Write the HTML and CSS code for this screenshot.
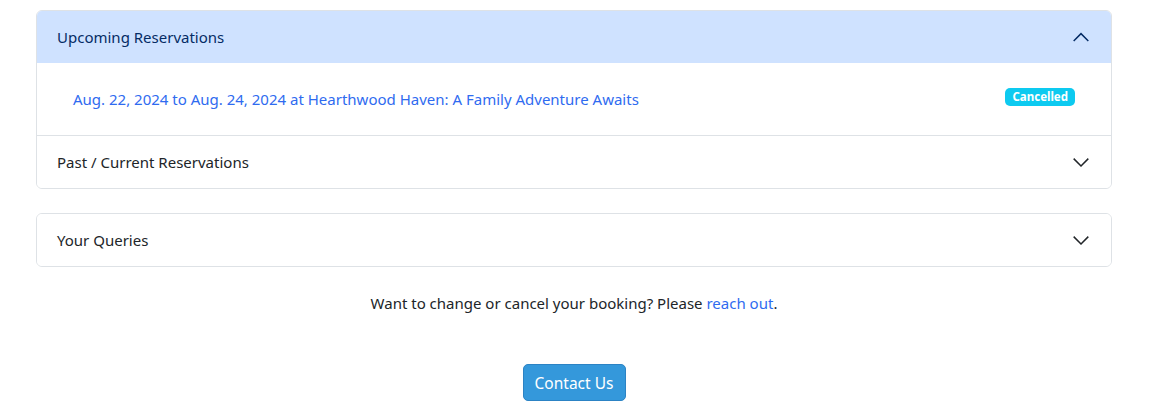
FILE: index.html
```html
<!DOCTYPE html>
<html lang="en">
<head>
<meta charset="utf-8">
<title>Reservations</title>
<link rel="stylesheet" href="styles.css">
</head>
<body>
<main class="page">
  <section class="accordion">
    <div class="acc-item">
      <button class="acc-btn active" type="button">
        <span>Upcoming Reservations</span>
        <svg class="chev" viewBox="0 0 16 16" width="18" height="18"><path d="M1.5 11.5 8 5l6.5 6.5" fill="none" stroke="currentColor" stroke-width="1.3"/></svg>
      </button>
      <div class="acc-body">
        <div class="res-item">
          <a href="#" class="res-link">Aug. 22, 2024 to Aug. 24, 2024 at Hearthwood Haven: A Family Adventure Awaits</a>
          <span class="badge">Cancelled</span>
        </div>
      </div>
    </div>
    <div class="acc-item">
      <button class="acc-btn" type="button">
        <span>Past / Current Reservations</span>
        <svg class="chev" viewBox="0 0 16 16" width="18" height="18"><path d="M1.5 5 8 11.5 14.5 5" fill="none" stroke="currentColor" stroke-width="1.3"/></svg>
      </button>
    </div>
  </section>

  <section class="accordion second">
    <div class="acc-item">
      <button class="acc-btn" type="button">
        <span>Your Queries</span>
        <svg class="chev" viewBox="0 0 16 16" width="18" height="18"><path d="M1.5 5 8 11.5 14.5 5" fill="none" stroke="currentColor" stroke-width="1.3"/></svg>
      </button>
    </div>
  </section>

  <p class="note">Want to change or cancel your booking? Please <a href="#">reach out</a>.</p>

  <div class="actions">
    <button class="contact" type="button">Contact Us</button>
  </div>
</main>
</body>
</html>
```

FILE: styles.css
```css
* { box-sizing: border-box; }
html, body { margin: 0; padding: 0; background: #fff; }
body {
  font-family: "Noto Sans", "Open Sans", sans-serif;
  font-size: 15px;
  color: #212529;
}
.page {
  width: 1076px;
  margin-left: 36px;
  padding-top: 10px;
}
.accordion {
  border: 1px solid #dee2e6;
  border-radius: 6px;
  overflow: hidden;
}
.accordion.second { margin-top: 24px; }
.acc-item + .acc-item { border-top: 1px solid #dee2e6; }
.acc-btn {
  display: flex;
  align-items: center;
  justify-content: space-between;
  width: 100%;
  height: 52px;
  padding: 0 21px 0 20px;
  border: 0;
  background: #fff;
  font: inherit;
  color: #212529;
  text-align: left;
  cursor: pointer;
}
.acc-btn.active {
  background: #cfe2ff;
  color: #052c65;
}
.chev { display: block; }
.acc-body {
  padding: 16px 20px;
}
.res-item {
  display: flex;
  align-items: center;
  justify-content: space-between;
  height: 40px;
  padding: 0 16px;
}
.res-link {
  color: #2f6bf0;
  text-decoration: none;
}
.badge {
  background: #0dcaf0;
  color: #fff;
  font-weight: 700;
  font-size: 11.5px;
  line-height: 1;
  padding: 3px 7px 4px;
  border-radius: 5px;
  margin-top: -4px;
}
.note {
  text-align: center;
  margin: 25px 0 0;
  line-height: 22px;
}
.note a { color: #2f6bf0; text-decoration: none; }
.actions {
  display: flex;
  justify-content: center;
  margin-top: 50px;
}
.contact {
  background: #3498db;
  color: #fff;
  border: 1px solid #2c83c4;
  border-radius: 5px;
  font: inherit;
  font-size: 15.5px;
  height: 37px;
  width: 103px;
  padding: 0;
}
```
